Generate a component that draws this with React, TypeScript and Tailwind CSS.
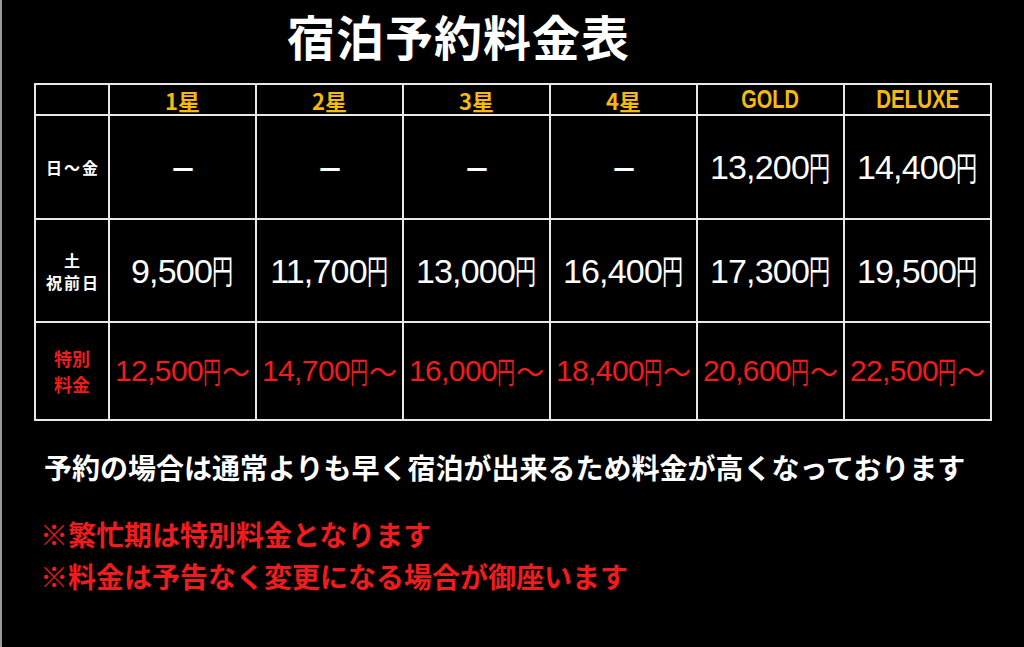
import React from "react";

const jp = "font-['Noto_Sans_CJK_JP',sans-serif]";
const num = "font-['Liberation_Sans','Noto_Sans_CJK_JP',sans-serif]";

function Price({ v }: { v: string }) {
  return (
    <div className="flex items-center justify-center text-white whitespace-nowrap leading-none text-[34px]">
      <span className={`${num} tracking-[-0.8px]`}>{v}</span>
      <span className="inline-block w-[22px] overflow-visible">
        <span className={`inline-block origin-left scale-x-[0.62] ${jp}`}>円</span>
      </span>
    </div>
  );
}

function Special({ v }: { v: string }) {
  return (
    <div className="flex items-center justify-center text-[#ee1c1c] whitespace-nowrap leading-none text-[30px]">
      <span className={`${num} tracking-[-0.6px]`}>{v}</span>
      <span className="inline-block w-[19px] overflow-visible">
        <span className={`inline-block origin-left scale-x-[0.6] ${jp}`}>円</span>
      </span>
      <span className={`${jp} text-[28px]`}>～</span>
    </div>
  );
}

function Dash() {
  return (
    <div className="flex items-center justify-center text-white">
      <span className={`${jp} font-bold text-[30px] leading-none inline-block scale-x-[0.9]`}>－</span>
    </div>
  );
}

const cell = "bg-black flex items-center justify-center";

export default function App() {
  const headers = ["1星", "2星", "3星", "4星"];
  const weekday = ["-", "-", "-", "-", "13,200", "14,400"];
  const weekend = ["9,500", "11,700", "13,000", "16,400", "17,300", "19,500"];
  const special = ["12,500", "14,700", "16,000", "18,400", "20,600", "22,500"];
  return (
    <div className="w-[1024px] h-[647px] bg-black border-l-2 border-[#9a9a9a] overflow-hidden">
      <div className="h-[83px] pl-[285px]">
        <h1 className={`${jp} font-bold text-[48px] leading-[70px] text-white tracking-[1px] whitespace-nowrap`}>
          宿泊予約料金表
        </h1>
      </div>
      <div className="ml-[32px] w-[958px] bg-[#e8e8e8] p-[2px] grid grid-cols-[72px_repeat(6,145px)] grid-rows-[29px_102px_101px_96px] gap-[2px]">
        <div className={cell}></div>
        {headers.map((h) => (
          <div key={h} className={cell}>
            <span className={`${jp} font-bold text-[22px] leading-none text-[#f6b90f]`}>{h}</span>
          </div>
        ))}
        <div className={cell}>
          <span className={`${num} font-bold text-[25px] leading-none text-[#f6b90f] scale-x-[0.8] inline-block`}>GOLD</span>
        </div>
        <div className={cell}>
          <span className={`${num} font-bold text-[25px] leading-none text-[#f6b90f] scale-x-[0.82] inline-block`}>DELUXE</span>
        </div>

        <div className={cell}>
          <span className={`${jp} font-bold text-[16px] leading-none text-white tracking-[2px] pl-[2px]`}>日～金</span>
        </div>
        {weekday.map((v, i) => (
          <div key={i} className={cell}>
            {v === "-" ? <Dash /> : <Price v={v} />}
          </div>
        ))}

        <div className={cell}>
          <div className={`${jp} font-bold text-[16px] leading-[22px] text-white tracking-[2px] text-center pl-[2px]`}>
            <div>土</div>
            <div>祝前日</div>
          </div>
        </div>
        {weekend.map((v, i) => (
          <div key={i} className={cell}>
            <Price v={v} />
          </div>
        ))}

        <div className={cell}>
          <div className={`${jp} font-bold text-[18px] leading-[26px] text-[#ee1c1c] text-center`}>
            <div>特別</div>
            <div>料金</div>
          </div>
        </div>
        {special.map((v, i) => (
          <div key={i} className={`${cell} overflow-visible`}>
            <Special v={v} />
          </div>
        ))}
      </div>

      <div className={`${jp} font-bold text-[28px] pl-[42px] mt-[26px] leading-[40px] text-white whitespace-nowrap`}>
        予約の場合は通常よりも早く宿泊が出来るため料金が高くなっております
      </div>
      <div className={`${jp} font-bold text-[28px] pl-[38px] mt-[26px] leading-[42px] text-[#ee1c1c] whitespace-nowrap`}>
        <div>※繁忙期は特別料金となります</div>
        <div>※料金は予告なく変更になる場合が御座います</div>
      </div>
    </div>
  );
}
